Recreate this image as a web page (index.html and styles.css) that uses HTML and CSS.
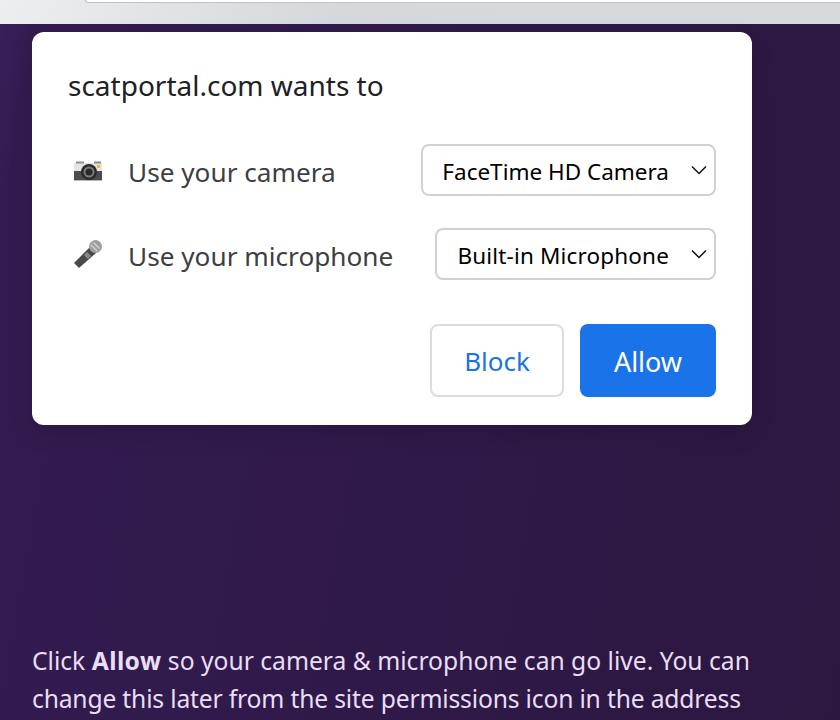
FILE: index.html
```html
<!DOCTYPE html>
<html lang="en">
<head>
<meta charset="utf-8">
<title>Permissions</title>
<link rel="stylesheet" href="styles.css">
</head>
<body>
<div class="chrome"><div class="omnibox"></div></div>
<main class="page">
  <section class="dialog">
    <h1 class="title">scatportal.com wants to</h1>
    <div class="row row-camera">
      <svg class="icon" viewBox="0 -1 30 30" aria-hidden="true">
        <rect x="1" y="7" width="28" height="18" rx="1" fill="#e4e4e4"/>
        <rect x="1" y="15" width="28" height="9" fill="#4c4c4c"/>
        <rect x="3" y="5.500" width="8" height="2" fill="#8f8f8f"/>
        <rect x="21" y="5.500" width="7" height="2" fill="#8a8a8a"/>
        <rect x="24" y="9" width="3" height="3" fill="#e5b93c"/>
        <circle cx="16" cy="16" r="8" fill="#2c2c2c"/>
        <circle cx="16" cy="16" r="5.500" fill="#7c7c7c"/>
        <circle cx="16" cy="16" r="3.500" fill="#2a2a2a"/>
        <rect x="1" y="24" width="28" height="1" fill="#b5b5b5"/>
      </svg>
      <span class="label">Use your camera</span>
      <div class="select select-cam"><span>FaceTime HD Camera</span>
        <svg class="chev" viewBox="0 0 16 10" aria-hidden="true"><path d="M1 1.500 8 8.500 15 1.500"/></svg>
      </div>
    </div>
    <div class="row row-mic">
      <svg class="icon" viewBox="0 0 30 30" aria-hidden="true">
        <path d="M17 8 23 14 6 29 1 24Z" fill="#494949"/>
        <path d="M14 13 18 17 15 20 11 16Z" fill="#8a8a8a"/>
        <circle cx="22.500" cy="7.500" r="6.500" fill="#9e9e9e"/>
        <path d="M18 6 24 12M20.500 3.500 26.500 9.500" stroke="#d4d4d4" stroke-width="1.200"/>
      </svg>
      <span class="label">Use your microphone</span>
      <div class="select select-mic"><span>Built-in Microphone</span>
        <svg class="chev" viewBox="0 0 16 10" aria-hidden="true"><path d="M1 1.500 8 8.500 15 1.500"/></svg>
      </div>
    </div>
    <div class="actions">
      <button class="btn btn-block">Block</button>
      <button class="btn btn-allow">Allow</button>
    </div>
  </section>
  <p class="note">Click <strong>Allow</strong> so your camera &amp; microphone can go live. You can<br><span class="tight">change this later from the site permissions icon in the address</span></p>
</main>
</body>
</html>
```
FILE: styles.css
```css
* { box-sizing: border-box; }
html, body { margin: 0; height: 720px; overflow: hidden; }
body {
  font-family: "Noto Sans", "Open Sans", sans-serif;
  background: linear-gradient(100deg, #3a1f5c 0, #331b50 40px, #311a4c 300px, #2b1740 100%);
  display: flex;
  flex-direction: column;
}
.chrome {
  height: 24px;
  flex: none;
  background: linear-gradient(100deg, #eceeef, #d5d8dc 40%, #d6d9dd);
  padding-left: 85px;
}
.omnibox {
  height: 3px;
  background: #fff;
  border-bottom: 1px solid #bfc2c6;
  border-left: 1px solid #bfc2c6;
  border-bottom-left-radius: 8px;
}
.page { padding: 8px 32px 0; flex: 1; }
.dialog {
  width: 720px;
  height: 393px;
  background: #fff;
  border-radius: 12px;
  padding: 35px 36px 28px;
  box-shadow: 0 8px 24px rgba(0,0,0,.12);
  display: flex;
  flex-direction: column;
}
.title {
  margin: 0;
  font-size: 28px;
  line-height: 36px;
  font-weight: 400;
  color: #202124;
}
.row {
  display: flex;
  align-items: center;
  height: 52px;
}
.row-camera { margin-top: 41px; }
.row-mic { margin-top: 32px; }
.icon { width: 30px; height: 30px; flex: none; margin-left: 5px; margin-right: 25px; }
.label { font-size: 26.200px; color: #3c4043; flex: 1; padding-top: 4px; }
.select {
  height: 52px;
  border: 2px solid #ced1d5;
  border-radius: 8px;
  padding: 2px 7px 0 20px;
  display: flex;
  align-items: center;
  gap: 22px;
  font-size: 22.500px;
  color: #000;
}
.select-cam { padding-left: 19px; }
.select-mic span { letter-spacing: 0.160px; }
.chev { width: 16px; height: 10px; flex: none; margin-top: -2px; }
.chev path { fill: none; stroke: #111; stroke-width: 1.500; }
.actions {
  margin-top: auto;
  display: flex;
  justify-content: flex-end;
  gap: 16px;
}
.btn {
  height: 73px;
  border-radius: 8px;
  font: inherit;
  font-size: 26px;
  padding: 2px 0 0;
}
.btn-block { width: 134px; background: #fff; color: #1a73e8; border: 2px solid #dadce0; padding-top: 0; }
.btn-allow { width: 136px; background: #1a73e8; color: #fff; border: 0; font-size: 27px; }
.note {
  margin: 217px 0 0;
  width: 760px;
  font-size: 24.650px;
  line-height: 38px;
  color: #e9def5;
}
.note strong { font-weight: 700; letter-spacing: 0.400px; }
.tight { letter-spacing: -0.170px; }
```
